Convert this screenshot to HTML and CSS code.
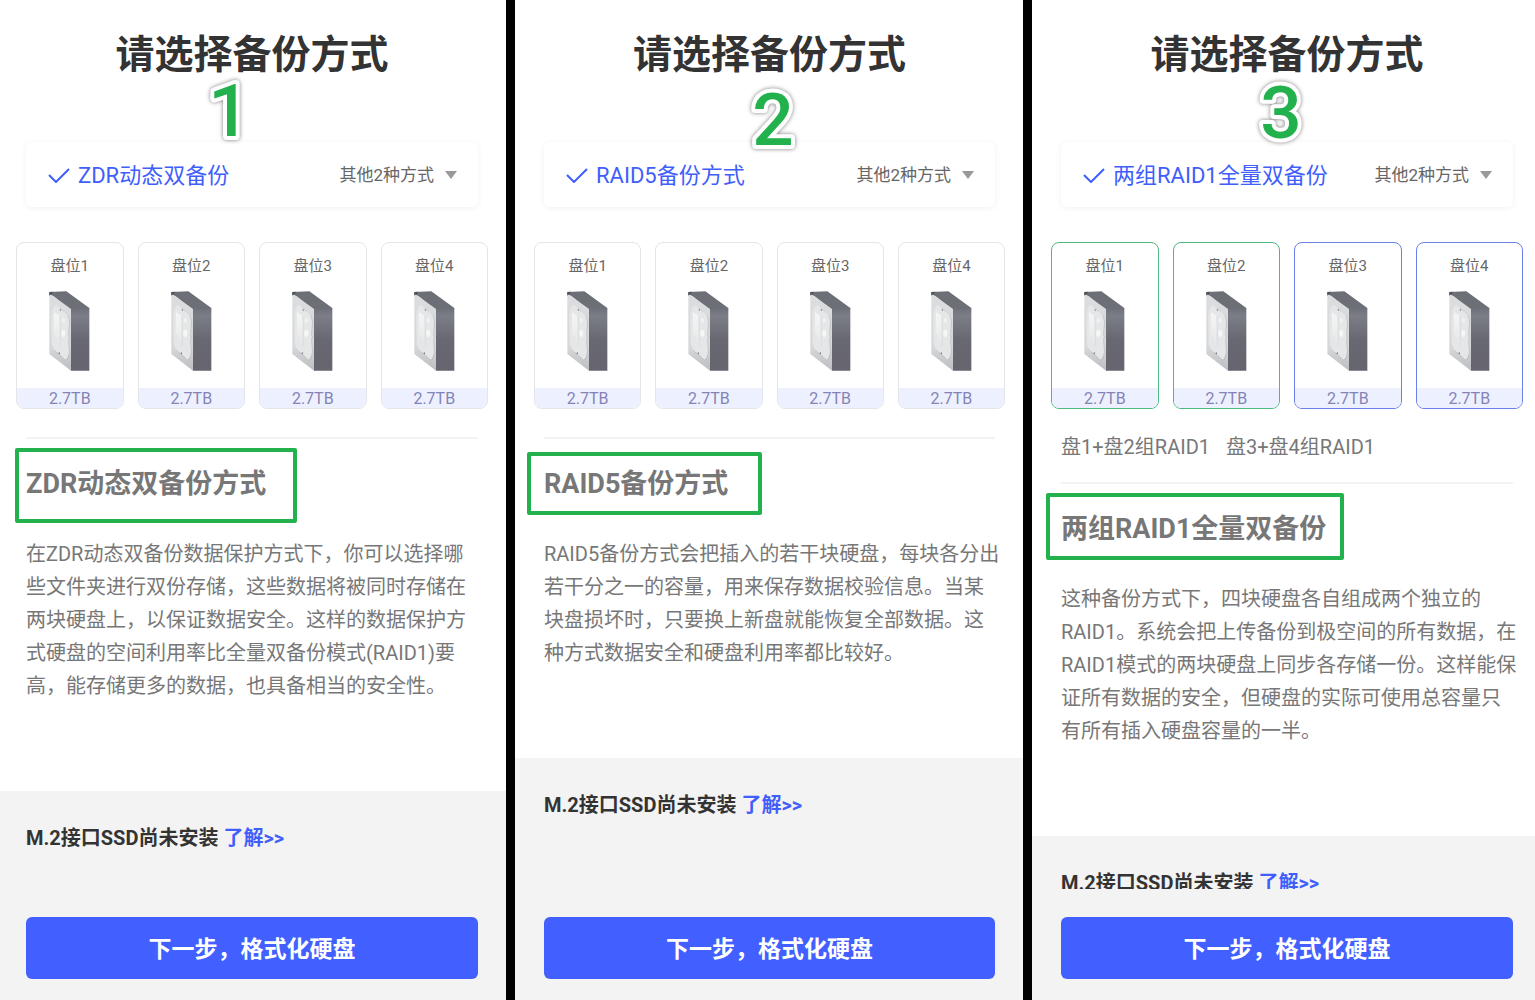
FILE: index.html
```html
<!DOCTYPE html>
<html lang="zh-CN">
<head>
    <meta charset="UTF-8">
    <meta name="viewport" content="width=device-width, initial-scale=1">
    <title>请选择备份方式</title>
    <link rel="stylesheet" href="styles.css">
</head>
<body>
    <!-- 公用图标 -->
    <svg class="sprite" aria-hidden="true">
        <defs>
            <linearGradient id="diskSide" x1="0" y1="0" x2="0" y2="1">
                <stop offset="0" stop-color="#6e717a"/>
                <stop offset="0.12" stop-color="#7b7e87"/>
                <stop offset="0.5" stop-color="#686872"/>
                <stop offset="1" stop-color="#66656f"/>
            </linearGradient>
            <linearGradient id="diskFace" x1="0" y1="0" x2="0" y2="1">
                <stop offset="0" stop-color="#dcdddf"/>
                <stop offset="0.7" stop-color="#d6d7d9"/>
                <stop offset="1" stop-color="#bcbdc0"/>
            </linearGradient>
            <linearGradient id="diskLabel" x1="0" y1="0" x2="0" y2="1">
                <stop offset="0" stop-color="#f6f6f6"/>
                <stop offset="1" stop-color="#e4e5e6"/>
            </linearGradient>
            <symbol id="disk" viewBox="0 0 123 240">
                <path d="M1 3L52 1L121 51L120 57H64L14 16L1 12Z" fill="#6c6f76"/>
                <path d="M1 3L12 2L8 11L1 15Z" fill="#50545a"/>
                <path d="M66 54L121 52V239H66Z" fill="url(#diskSide)"/>
                <path d="M1 14Q2 10 8 12L66 54V239L1 189Z" fill="url(#diskFace)"/>
                <path d="M24 44Q34 48 42 60L54 68Q62 78 62 96L60 132Q64 138 60 146L62 184Q60 206 50 209L32 192Q20 186 14 174L40 180L50 100Z" fill="#b8babc"/>
                <path d="M22 42Q33 47 40 59L52 67Q60 77 60 95L58 132Q62 139 58 146L60 182Q58 203 49 206L31 189Q13 179 8 158L7 74Q9 45 22 42Z" fill="#e5e6e7"/>
                <path d="M15 64L31 74L32 168L27 162L25 142L15 128Z" fill="url(#diskLabel)"/>
                <path d="M31 76L34 82V166" fill="none" stroke="#d9dadb" stroke-width="2"/>
                <ellipse cx="43" cy="88" rx="5" ry="8" fill="#f1f1f2"/>
                <ellipse cx="43" cy="127" rx="6" ry="11" fill="#f6f6f7"/>
                <ellipse cx="34" cy="57" rx="2" ry="3" fill="#8b8e93"/>
                <ellipse cx="31" cy="187" rx="2" ry="3" fill="#77797e"/>
            </symbol>
            <symbol id="check" viewBox="0 0 22 16">
                <path d="M1 8L8 15L21 2" fill="none" stroke="#3f5efb" stroke-width="2"/>
            </symbol>
            <symbol id="arrow" viewBox="0 0 12 8">
                <path d="M0 0H12L6 8Z" fill="#999"/>
            </symbol>
        </defs>
    </svg>

    <main class="board">
        <!-- ZDR -->
        <section class="panel panel-zdr">
            <div class="content">
                <h1 class="title">请选择备份方式</h1>
                <button type="button" class="mode">
                    <svg class="check"><use href="#check"/></svg>
                    <span class="mode-name">ZDR动态双备份</span>
                    <span class="mode-more">其他2种方式</span>
                    <svg class="arrow"><use href="#arrow"/></svg>
                </button>
                <ul class="disks">
                    <li class="disk"><span class="slot">盘位1</span><svg class="drive"><use href="#disk"/></svg><span class="size">2.7TB</span></li>
                    <li class="disk"><span class="slot">盘位2</span><svg class="drive"><use href="#disk"/></svg><span class="size">2.7TB</span></li>
                    <li class="disk"><span class="slot">盘位3</span><svg class="drive"><use href="#disk"/></svg><span class="size">2.7TB</span></li>
                    <li class="disk"><span class="slot">盘位4</span><svg class="drive"><use href="#disk"/></svg><span class="size">2.7TB</span></li>
                </ul>
                <hr class="divider">
                <h2 class="subtitle">ZDR动态双备份方式</h2>
                <p class="desc">在ZDR动态双备份数据保护方式下，你可以选择哪<br>些文件夹进行双份存储，这些数据将被同时存储在<br>两块硬盘上，以保证数据安全。这样的数据保护方<br>式硬盘的空间利用率比全量双备份模式(RAID1)要<br>高，能存储更多的数据，也具备相当的安全性。</p>
                <div class="ssd">M.2接口SSD尚未安装 <a href="#">了解&gt;&gt;</a></div>
            </div>
            <div class="footer">
                <button type="button" class="next">下一步，格式化硬盘</button>
            </div>
            <svg class="number" viewBox="0 0 60 72"><text x="30" y="62">1</text></svg>
            <span class="mark"></span>
        </section>

        <!-- RAID5 -->
        <section class="panel panel-raid5">
            <div class="content">
                <h1 class="title">请选择备份方式</h1>
                <button type="button" class="mode">
                    <svg class="check"><use href="#check"/></svg>
                    <span class="mode-name">RAID5备份方式</span>
                    <span class="mode-more">其他2种方式</span>
                    <svg class="arrow"><use href="#arrow"/></svg>
                </button>
                <ul class="disks">
                    <li class="disk"><span class="slot">盘位1</span><svg class="drive"><use href="#disk"/></svg><span class="size">2.7TB</span></li>
                    <li class="disk"><span class="slot">盘位2</span><svg class="drive"><use href="#disk"/></svg><span class="size">2.7TB</span></li>
                    <li class="disk"><span class="slot">盘位3</span><svg class="drive"><use href="#disk"/></svg><span class="size">2.7TB</span></li>
                    <li class="disk"><span class="slot">盘位4</span><svg class="drive"><use href="#disk"/></svg><span class="size">2.7TB</span></li>
                </ul>
                <hr class="divider">
                <h2 class="subtitle">RAID5备份方式</h2>
                <p class="desc">RAID5备份方式会把插入的若干块硬盘，每块各分出<br>若干分之一的容量，用来保存数据校验信息。当某<br>块盘损坏时，只要换上新盘就能恢复全部数据。这<br>种方式数据安全和硬盘利用率都比较好。</p>
                <div class="ssd">M.2接口SSD尚未安装 <a href="#">了解&gt;&gt;</a></div>
            </div>
            <div class="footer">
                <button type="button" class="next">下一步，格式化硬盘</button>
            </div>
            <svg class="number" viewBox="0 0 60 72"><text x="30" y="62">2</text></svg>
            <span class="mark"></span>
        </section>

        <!-- 两组RAID1 -->
        <section class="panel panel-raid1">
            <div class="content">
                <h1 class="title">请选择备份方式</h1>
                <button type="button" class="mode">
                    <svg class="check"><use href="#check"/></svg>
                    <span class="mode-name">两组RAID1全量双备份</span>
                    <span class="mode-more">其他2种方式</span>
                    <svg class="arrow"><use href="#arrow"/></svg>
                </button>
                <ul class="disks">
                    <li class="disk group-a"><span class="slot">盘位1</span><svg class="drive"><use href="#disk"/></svg><span class="size">2.7TB</span></li>
                    <li class="disk group-a"><span class="slot">盘位2</span><svg class="drive"><use href="#disk"/></svg><span class="size">2.7TB</span></li>
                    <li class="disk group-b"><span class="slot">盘位3</span><svg class="drive"><use href="#disk"/></svg><span class="size">2.7TB</span></li>
                    <li class="disk group-b"><span class="slot">盘位4</span><svg class="drive"><use href="#disk"/></svg><span class="size">2.7TB</span></li>
                </ul>
                <div class="groups"><span>盘1+盘2组RAID1</span><span>盘3+盘4组RAID1</span></div>
                <hr class="divider">
                <h2 class="subtitle">两组RAID1全量双备份</h2>
                <p class="desc">这种备份方式下，四块硬盘各自组成两个独立的<br>RAID1。系统会把上传备份到极空间的所有数据，在<br>RAID1模式的两块硬盘上同步各存储一份。这样能保<br>证所有数据的安全，但硬盘的实际可使用总容量只<br>有所有插入硬盘容量的一半。</p>
                <div class="ssd">M.2接口SSD尚未安装 <a href="#">了解&gt;&gt;</a></div>
            </div>
            <div class="footer">
                <button type="button" class="next">下一步，格式化硬盘</button>
            </div>
            <svg class="number" viewBox="0 0 60 72"><text x="30" y="62">3</text></svg>
            <span class="mark"></span>
        </section>
    </main>
</body>
</html>
```

FILE: styles.css
```css
* {
    box-sizing: border-box;
}

body {
    margin: 0;
    background: #000;
    color: #777;
    font-family: Roboto, "Noto Sans CJK SC", sans-serif;
}

button {
    font-family: inherit;
    border: none;
    cursor: pointer;
}

.sprite {
    position: absolute;
    width: 0;
    height: 0;
}

/* 三个手机界面并排 */
.board {
    display: grid;
    grid-template-columns: 506fr 508fr 503fr;
    gap: 9px;
    height: 100vh;
}

.panel {
    --left: 29px;
    --right: 28px;
    position: relative;
    display: flex;
    flex-direction: column;
    min-width: 0;
    min-height: 0;
    background: #fff;
    overflow: hidden;
}

.panel-zdr {
    --left: 26px;
}

.panel-raid1 {
    --right: 22px;
}

.content {
    flex: 1;
    display: flex;
    flex-direction: column;
    min-height: 0;
    padding: 28px var(--right) 0 var(--left);
    overflow: hidden;
}

.content > * {
    flex-shrink: 0;
}

.title {
    margin: 0 0 60px;
    color: #333;
    font-size: 39px;
    line-height: 54px;
    text-align: center;
}

/* 备份方式下拉 */
.mode {
    display: flex;
    align-items: center;
    height: 65px;
    padding: 0 21px 0 22px;
    border-radius: 6px;
    background: #fff;
    box-shadow: 0 1px 6px rgba(0, 0, 0, 0.06);
}

.check {
    width: 22px;
    height: 16px;
    margin-right: 8px;
}

.mode-name {
    padding-bottom: 4px;
    color: #3f5efb;
    font-size: 22px;
}

.mode-more {
    margin-left: auto;
    padding-bottom: 2px;
    color: #666;
    font-size: 17px;
}

.arrow {
    width: 12px;
    height: 8px;
    margin-left: 11px;
}

/* 硬盘列表 */
.disks {
    display: grid;
    grid-template-columns: repeat(4, 1fr);
    gap: 14px;
    margin: 35px -10px 0;
    padding: 0;
    list-style: none;
}

.disk {
    display: flex;
    flex-direction: column;
    align-items: center;
    padding-top: 12px;
    border: 1px solid #e4e5e9;
    border-radius: 8px;
    overflow: hidden;
}

.group-a {
    border-color: #4dba80;
}

.group-b {
    border-color: #6a80ea;
}

.slot {
    color: #666;
    font-size: 15px;
    line-height: 22px;
}

.drive {
    width: 41px;
    height: 80px;
    margin: 14px 0 17px;
}

.size {
    align-self: stretch;
    height: 20px;
    background: #edf1ff;
    color: #8583b5;
    font-size: 16px;
    line-height: 22px;
    text-align: center;
}

.groups {
    display: flex;
    gap: 16px;
    margin: 22px 0 19px;
    font-size: 20px;
    line-height: 32px;
}

.divider {
    width: 100%;
    height: 2px;
    margin: 0;
    border: none;
    background: #f2f2f2;
}

.disks + .divider {
    margin-top: 28px;
}

.subtitle {
    margin: 25px 0 34px;
    font-size: 27px;
    line-height: 40px;
}

.desc {
    margin: 0 0 88px;
    font-size: 20px;
    line-height: 33px;
    white-space: nowrap;
}

.ssd {
    flex-grow: 1;
    margin: 0 calc(-1 * var(--right)) 0 calc(-1 * var(--left));
    padding: 31px var(--right) 0 var(--left);
    background: #f3f3f3;
    color: #333;
    font-size: 20px;
    font-weight: bold;
    line-height: 32px;
}

.ssd a {
    color: #3f5efb;
    text-decoration: none;
}

.footer {
    padding: 28px var(--right) 21px var(--left);
    background: #f3f3f3;
}

.next {
    display: block;
    width: 100%;
    height: 62px;
    padding-bottom: 4px;
    border-radius: 6px;
    background: #425fff;
    color: #fff;
    font-size: 23px;
    font-weight: bold;
}

/* 绿色标注 */
.number {
    position: absolute;
    top: 74px;
    left: 199px;
    width: 60px;
    height: 72px;
    overflow: visible;
    filter: drop-shadow(0 0 2px rgba(0, 0, 0, 0.5));
}

.number text {
    fill: #22b14c;
    stroke: #fff;
    stroke-width: 8px;
    stroke-linejoin: round;
    paint-order: stroke;
    font-size: 73px;
    font-weight: 500;
    text-anchor: middle;
}

.panel-raid5 .number {
    top: 83px;
    left: 228px;
}

.panel-raid1 .number {
    top: 76px;
    left: 219px;
}

.mark {
    position: absolute;
    top: 448px;
    left: 15px;
    width: 282px;
    height: 75px;
    border: 4px solid #22b14c;
    border-radius: 2px;
}

.panel-raid5 .mark {
    top: 452px;
    left: 12px;
    width: 235px;
    height: 63px;
}

.panel-raid1 .mark {
    top: 493px;
    left: 14px;
    width: 298px;
    height: 67px;
}
```
